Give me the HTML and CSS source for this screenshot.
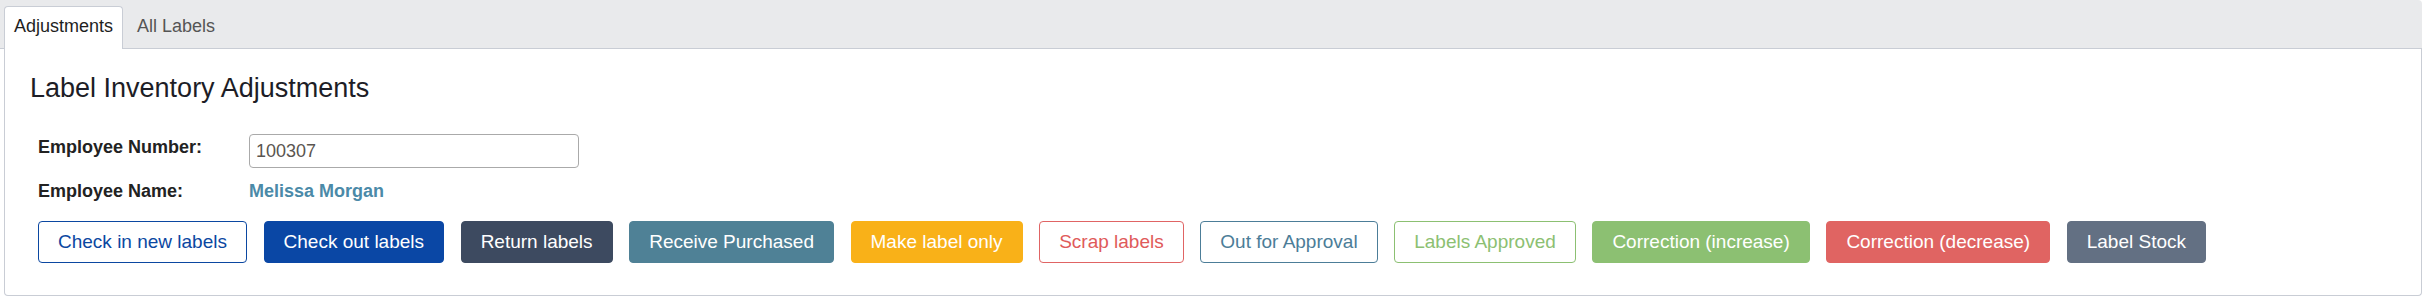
FILE: index.html
```html
<!DOCTYPE html>
<html>
<head>
<meta charset="utf-8">
<title>Label Inventory Adjustments</title>
<link rel="stylesheet" href="styles.css">
</head>
<body>
<div class="tabs-bar">
  <div class="tab active">Adjustments</div>
  <div class="tab">All Labels</div>
</div>
<div class="panel">
  <h2 class="title">Label Inventory Adjustments</h2>
  <div class="form">
    <div class="field-grid">
      <div class="label">Employee Number:</div>
      <div><input class="text-input" type="text" value="100307"></div>
      <div class="label">Employee Name:</div>
      <div class="emp-name">Melissa Morgan</div>
    </div>
    <div class="btn-row">
      <button class="btn btn-outline-blue">Check in new labels</button>
      <button class="btn btn-blue">Check out labels</button>
      <button class="btn btn-navy">Return labels</button>
      <button class="btn btn-teal">Receive Purchased</button>
      <button class="btn btn-amber">Make label only</button>
      <button class="btn btn-outline-red">Scrap labels</button>
      <button class="btn btn-outline-teal">Out for Approval</button>
      <button class="btn btn-outline-green">Labels Approved</button>
      <button class="btn btn-green">Correction (increase)</button>
      <button class="btn btn-red">Correction (decrease)</button>
      <button class="btn btn-slate">Label Stock</button>
    </div>
  </div>
</div>
</body>
</html>
```
FILE: styles.css
```css
html, body {
  margin: 0;
  padding: 0;
  background: #ffffff;
  font-family: "Liberation Sans", Arial, sans-serif;
  color: #222222;
}

.tabs-bar {
  box-sizing: border-box;
  height: 49px;
  margin-right: 1px;
  padding-left: 4px;
  background: #e9eaec;
  border-bottom: 1px solid #c9cdd5;
  border-radius: 0 4px 0 0;
  display: flex;
  align-items: flex-end;
}

.tab {
  box-sizing: border-box;
  height: 43px;
  margin-bottom: -1px;
  padding: 0 9px 2px 9px;
  line-height: 39px;
  font-size: 18px;
  color: #555555;
  border: 1px solid transparent;
  border-bottom: 0;
  border-radius: 4px 4px 0 0;
  margin-right: 4px;
}

.tab.active {
  background: #ffffff;
  color: #1e1e1e;
  border-color: #c9cdd5;
}

.panel {
  margin: 0 1px 0 4px;
  padding: 24px 24px 32px 25px;
  background: #ffffff;
  border: 1px solid #c9cdd5;
  border-top: 0;
  border-radius: 0 0 4px 4px;
}

.title {
  margin: 0;
  font-size: 27px;
  line-height: 30px;
  font-weight: normal;
  color: #1d1d26;
}

.form {
  margin: 31px 0 0 8px;
}

.field-grid {
  display: grid;
  grid-template-columns: 211px 330px;
  row-gap: 9.5px;
  align-items: start;
}

.label {
  font-size: 18px;
  line-height: 26px;
  font-weight: bold;
  color: #222222;
}

.text-input {
  box-sizing: border-box;
  display: block;
  width: 330px;
  height: 34px;
  padding: 0 6px;
  border: 1px solid #aaaaaa;
  border-radius: 4px;
  font-family: "Liberation Sans", Arial, sans-serif;
  font-size: 18px;
  color: #5a5550;
  background: #ffffff;
  outline: none;
}

.emp-name {
  font-size: 18px;
  line-height: 26px;
  font-weight: bold;
  color: #4b8aa8;
}

.btn-row {
  margin-top: 17px;
  display: flex;
  gap: 16.6px;
}

.btn {
  box-sizing: border-box;
  height: 42px;
  padding: 0 19px;
  border: 1px solid transparent;
  border-radius: 4px;
  font-family: "Liberation Sans", Arial, sans-serif;
  font-size: 19px;
  line-height: 40px;
  color: #ffffff;
  background: transparent;
  white-space: nowrap;
  cursor: pointer;
}

.btn-outline-blue { border-color: #0b47a1; color: #0b47a1; background: #ffffff; }
.btn-blue { background: #0a47a5; border-color: #0a47a5; }
.btn-navy { background: #3d4a60; border-color: #3d4a60; }
.btn-teal { background: #4f8196; border-color: #4f8196; }
.btn-amber { background: #f9b118; border-color: #f9b118; }
.btn-outline-red { border-color: #e06464; color: #e05a5a; background: #ffffff; }
.btn-outline-teal { border-color: #4c7d98; color: #4c7d98; background: #ffffff; }
.btn-outline-green { border-color: #8cc072; color: #8cc072; background: #ffffff; }
.btn-green { background: #8cc072; border-color: #8cc072; }
.btn-red { background: #e06462; border-color: #e06462; }
.btn-slate { background: #637083; border-color: #637083; }
```
